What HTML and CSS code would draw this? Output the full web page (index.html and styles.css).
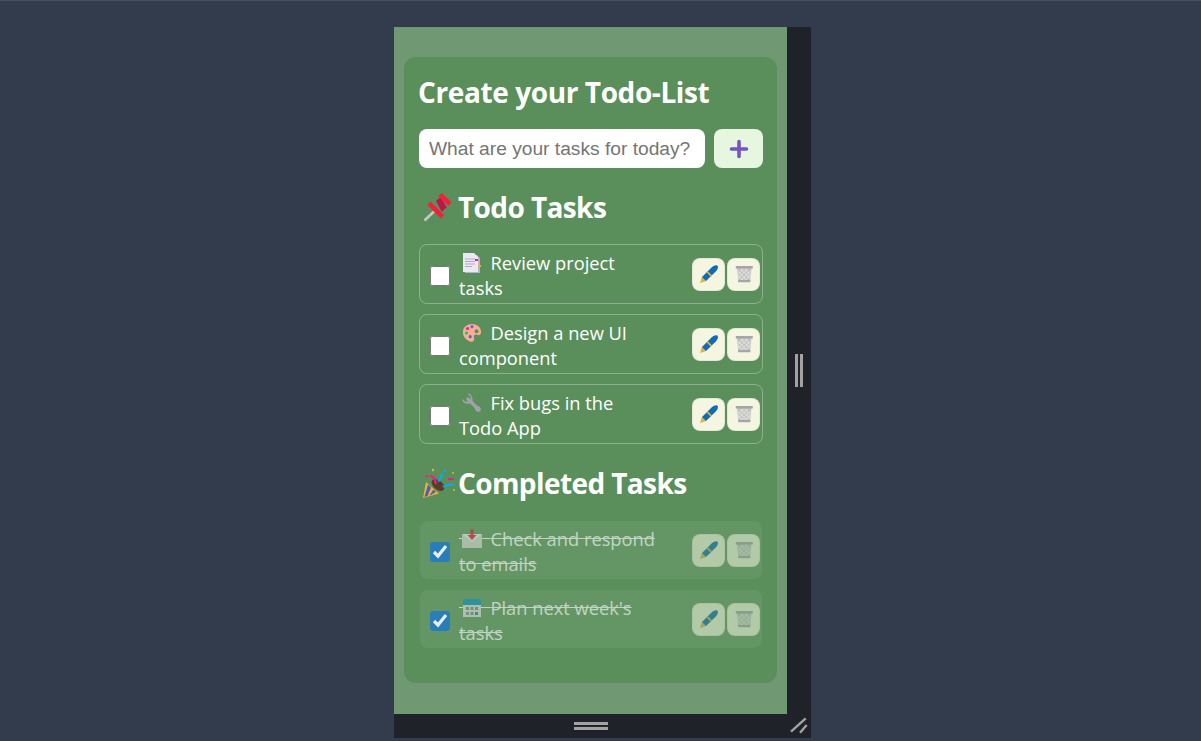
FILE: index.html
```html
<!DOCTYPE html>
<html lang="en">
<head>
    <meta charset="UTF-8">
    <title>Todo List</title>
    <link rel="stylesheet" href="styles.css">
</head>
<body>
    <svg class="defs" width="0" height="0">
        <defs>
            <symbol id="pen" viewBox="0 0 20 20">
                <path d="M1 19L3 12.500L7.500 17Z" fill="#d9b54a"/>
                <path d="M3 13L12.500 3.500C15 1.200 17.500 .7 18.500 1.700S19 5 16.800 7.500L7 17Z" fill="#0f6cb5"/>
                <path d="M8 7.700L12.500 12.200" stroke="#e2b23c" stroke-width="1.700"/>
            </symbol>
            <symbol id="bin" viewBox="0 0 20 20">
                <path d="M3 4h14.500l-1.300 13.500H4.300z" fill="#c4c4c4"/>
                <path d="M4 7l9 10M7 5l9 9.500M11 5l5.500 6M3.500 11l5.500 6M16.500 7L6.500 17M13.500 5L4 14.500M9.500 5L3.500 11M16.500 11l-6 6" stroke="#e6e6e0" stroke-width=".9" fill="none"/>
                <path d="M1.800 2h17v2.600h-17zM4 16h12.500l-.3 2.300H4.300z" fill="#a6a6a6"/>
            </symbol>
        </defs>
    </svg>

    <div class="frame">
        <main class="stage">
            <section class="card">
                <h1>Create your Todo-List</h1>
                <form class="add-row">
                    <input class="task-input" type="text" placeholder="What are your tasks for today?">
                    <button class="add-btn" type="button" aria-label="Add">
                        <svg width="20" height="20" viewBox="0 0 20 20"><path d="M10 2.500v15M2.500 10h15" stroke="#7654c6" stroke-width="3.600" stroke-linecap="round"/></svg>
                    </button>
                </form>

                <h2 class="heading heading-todo">
                    <svg class="heading-icon" width="32" height="32" viewBox="0 0 32 32">
                        <path d="M1.500 29.500L11 20.500" stroke="#c8c8c8" stroke-width="2.600"/>
                        <path d="M13 9.700L17.700 6.300L23.700 16.300L18.700 20.700Z" fill="#c0144c"/>
                        <path d="M15.300 5.300L18.700 2L28.700 11.300L25.300 14.700Z" fill="#f2213a"/>
                        <path d="M4.300 14L7.700 10.700L21 24L17.700 27.500Z" fill="#f2213a"/>
                    </svg>
                    Todo Tasks
                </h2>
                <ul class="tasks">
                    <li class="task">
                        <input type="checkbox">
                        <span class="task-text"><span class="emoji">&nbsp;&nbsp;&nbsp;&nbsp;&nbsp;&nbsp;<svg width="20" height="20" viewBox="0 0 20 20"><path d="M3 2h12l3 3v15H3z" fill="#b9b0cf"/><path d="M1 0h11l4 4v15H1z" fill="#ece8f3"/><path d="M3 6h10M3 8.500h10M3 11h10M3 13.500h7" stroke="#b3abc6"/><path d="M13 6h3v2h-3z" fill="#ef1c8a"/><path d="M16 12h3v2h-3z" fill="#eeb02d"/></svg></span>Review project tasks</span>
                        <button class="icon-btn" type="button"><svg width="20" height="20"><use href="#pen"/></svg></button>
                        <button class="icon-btn" type="button"><svg width="20" height="20"><use href="#bin"/></svg></button>
                    </li>
                    <li class="task">
                        <input type="checkbox">
                        <span class="task-text"><span class="emoji">&nbsp;&nbsp;&nbsp;&nbsp;&nbsp;&nbsp;<svg width="20" height="20" viewBox="0 0 22 22"><path d="M11 1c6 0 10 4 10 9 0 3-2 4-4 3s-4 0-4 2 1 2 0 4-3 2-5 1C3 18 1 14 1 10 1 5 5 1 11 1z" fill="#f6ae95"/><circle cx="6" cy="6" r="1.700" fill="#ef1c8a"/><circle cx="11" cy="4" r="1.700" fill="#8a55d8"/><circle cx="16" cy="9" r="2.200" fill="#5a8f5c"/><circle cx="5" cy="11" r="1.700" fill="#14c26f"/><circle cx="9" cy="15" r="1.700" fill="#5060e0"/></svg></span>Design a new UI component</span>
                        <button class="icon-btn" type="button"><svg width="20" height="20"><use href="#pen"/></svg></button>
                        <button class="icon-btn" type="button"><svg width="20" height="20"><use href="#bin"/></svg></button>
                    </li>
                    <li class="task">
                        <input type="checkbox">
                        <span class="task-text"><span class="emoji">&nbsp;&nbsp;&nbsp;&nbsp;&nbsp;&nbsp;<svg width="20" height="20" viewBox="0 0 20 20"><path d="M6 6l10.500 10.500" stroke="#a2a2ac" stroke-width="3.400" stroke-linecap="round"/><path d="M5.500 .5L8.500 3.500 9 8 7.500 9 3 8.500 .5 5.500C0 9 3 11.500 6 10.500 9 11.500 12 8 10 4.500 9.500 2 8 0 5.500 .5z" fill="#a2a2ac"/><path d="M13 16l3-3 2 1 1 3-2 2-3-1z" fill="#a2a2ac"/></svg></span>Fix bugs in the Todo App</span>
                        <button class="icon-btn" type="button"><svg width="20" height="20"><use href="#pen"/></svg></button>
                        <button class="icon-btn" type="button"><svg width="20" height="20"><use href="#bin"/></svg></button>
                    </li>
                </ul>

                <h2 class="heading heading-done">
                    <svg class="heading-icon" width="32" height="32" viewBox="0 0 32 32">
                        <path d="M3 15L16 26.500L0 31Z" fill="#eeb32e"/>
                        <path d="M5 17.500L8 20.500L4.500 29L1.500 30Z" fill="#4c5cc0"/>
                        <path d="M10.500 22.500L13 24.800L8 28L6.500 28.500Z" fill="#4c5cc0"/>
                        <ellipse cx="15" cy="18" rx="7.500" ry="4.500" transform="rotate(40 15 18)" fill="#5c3a2a"/>
                        <path d="M7 9c4 0 5 3 6 8M25 12h6M3 9l2 1" stroke="#ee1c8a" stroke-width="2.200" fill="none"/>
                        <path d="M15 14c4-1 2-5 5-7M20 20c3-3 6-1 11-3" stroke="#14a9e0" stroke-width="2.400" fill="none"/>
                        <path d="M21 5l2-2" stroke="#14a9e0" stroke-width="2"/>
                        <circle cx="10" cy="3" r="1.200" fill="#e8b32e"/>
                        <circle cx="30" cy="6" r="1" fill="#e8b32e"/>
                        <circle cx="31" cy="23" r="1" fill="#e8b32e"/>
                    </svg>
                    Completed Tasks
                </h2>
                <ul class="tasks tasks-done">
                    <li class="task done">
                        <input type="checkbox" checked>
                        <span class="task-text"><span class="emoji">&nbsp;&nbsp;&nbsp;&nbsp;&nbsp;&nbsp;<svg width="20" height="20" viewBox="0 0 20 20"><path d="M0 5h20v14H0z" fill="#d6d6d6"/><path d="M0 5l10 8 10-8z" fill="#ececec"/><path d="M8.500 0h3v6h3l-4.500 5-4.500-5h3z" fill="#e0203e"/></svg></span>Check and respond to emails</span>
                        <button class="icon-btn" type="button"><svg width="20" height="20"><use href="#pen"/></svg></button>
                        <button class="icon-btn" type="button"><svg width="20" height="20"><use href="#bin"/></svg></button>
                    </li>
                    <li class="task done">
                        <input type="checkbox" checked>
                        <span class="task-text"><span class="emoji">&nbsp;&nbsp;&nbsp;&nbsp;&nbsp;&nbsp;<svg width="20" height="20" viewBox="0 0 20 20"><path d="M1 5h18v14H1z" fill="#dedede"/><path d="M1 3q0-2 2-2h14q2 0 2 2v4H1z" fill="#0a8fc4"/><path d="M4 9h3v3H4zM8.500 9h3v3h-3zM13 9h3v3h-3zM4 14h3v3H4zM8.500 14h3v3h-3z" fill="#8a8a8a"/><path d="M13 14h3v3h-3z" fill="#0a8fc4"/></svg></span>Plan next week's tasks</span>
                        <button class="icon-btn" type="button"><svg width="20" height="20"><use href="#pen"/></svg></button>
                        <button class="icon-btn" type="button"><svg width="20" height="20"><use href="#bin"/></svg></button>
                    </li>
                </ul>
            </section>
        </main>

        <div class="side-bar">
            <span class="grip-v"></span>
        </div>
        <div class="bottom-bar">
            <span class="grip-h"></span>
        </div>
        <div class="corner">
            <svg width="24" height="24" viewBox="0 0 24 24"><path d="M4 17.700L18.700 4.300M13 18.700L19.700 11" stroke="#a2a2a2" stroke-width="2.400" fill="none"/></svg>
        </div>
    </div>
</body>
</html>
```

FILE: styles.css
```css
* {
    box-sizing: border-box;
}
body {
    margin: 0;
    height: 741px;
    overflow: hidden;
    background-color: #333c4d;
    border-top: 1px solid #48505e;
    font-family: 'Open Sans', sans-serif;
    color: white;
}
.defs {
    display: block;
    height: 0;
}
.frame {
    display: grid;
    grid-template-columns: 393px 24px;
    grid-template-rows: 687px 24px;
    width: 417px;
    margin: 26px 0 0 394px;
    background-color: #1f2229;
}
.stage {
    padding: 30px 10px;
    background-color: #6f9873;
}
.card {
    height: 626px;
    padding: 14px 14px 0 15px;
    background-color: #5a8f5c;
    border-radius: 12px;
}
h1 {
    margin: 0 0 0 -1px;
    font-size: 28px;
    line-height: 43px;
    font-weight: 700;
    letter-spacing: -0.4px;
}
.add-row {
    display: flex;
    gap: 9px;
    margin-top: 15px;
}
.task-input {
    width: 287px;
    height: 39px;
    padding: 0 10px;
    border: none;
    border-radius: 8px;
    background: white;
    font-family: 'Liberation Sans', sans-serif;
    font-size: 19.2px;
}
.task-input::placeholder {
    color: #757575;
}
.add-btn {
    display: flex;
    align-items: center;
    justify-content: center;
    width: 49px;
    height: 39px;
    padding: 0;
    border: none;
    border-radius: 8px;
    background-color: #e6f6df;
}
.heading {
    display: flex;
    align-items: center;
    margin: 0;
    font-size: 28px;
    font-weight: 700;
    line-height: 40px;
    letter-spacing: -0.6px;
}
.heading-todo {
    margin-top: 19px;
    margin-bottom: 17px;
}
.heading-done {
    margin-top: 19px;
    margin-bottom: 18px;
}
.heading-icon {
    flex: none;
    margin: 0 3px 0 4px;
}
.tasks {
    display: flex;
    flex-direction: column;
    gap: 10px;
    margin: 0;
    padding: 0;
    list-style: none;
}
.tasks-done {
    gap: 11px;
}
.task {
    display: flex;
    align-items: center;
    width: 344px;
    height: 60px;
    padding: 0 2px 0 10px;
    border: 1px solid rgba(255, 255, 255, 0.3);
    border-radius: 8px;
}
.task input {
    flex: none;
    width: 20px;
    height: 20px;
    margin: 4px 9px 0 0;
    accent-color: #2079c7;
}
.task-text {
    width: 197px;
    margin-right: 36px;
    padding-top: 1px;
    font-size: 18.3px;
    line-height: 25px;
}
.emoji {
    position: relative;
    letter-spacing: 0.5px;
}
.emoji svg {
    position: absolute;
    top: 3px;
    left: 3px;
}
.icon-btn {
    display: flex;
    flex: none;
    align-items: center;
    justify-content: center;
    width: 33px;
    height: 33px;
    padding: 0;
    margin-left: 2px;
    border: 1px solid rgba(0, 0, 0, 0.06);
    border-radius: 8px;
    background-color: #f5f6e2;
}
.task .icon-btn:first-of-type {
    margin-left: 0;
}
.task.done {
    width: 342px;
    height: 58px;
    margin-left: 1px;
    padding-left: 10px;
    padding-right: 1px;
    border: none;
    background-color: rgba(255, 255, 255, 0.06);
}
.task.done .task-text {
    text-decoration: line-through;
    opacity: 0.6;
}
.task.done .icon-btn {
    opacity: 0.55;
}
.task.done input {
    opacity: 0.85;
}
.side-bar {
    display: flex;
    align-items: center;
    justify-content: center;
    background-color: #1f2229;
}
.grip-v {
    width: 8px;
    height: 33px;
    border-left: 3px solid #a2a2a2;
    border-right: 3px solid #a2a2a2;
}
.bottom-bar {
    display: flex;
    align-items: center;
    justify-content: center;
}
.grip-h {
    width: 34px;
    height: 8px;
    border-top: 3px solid #a2a2a2;
    border-bottom: 3px solid #a2a2a2;
}
.corner {
    display: flex;
}
```
